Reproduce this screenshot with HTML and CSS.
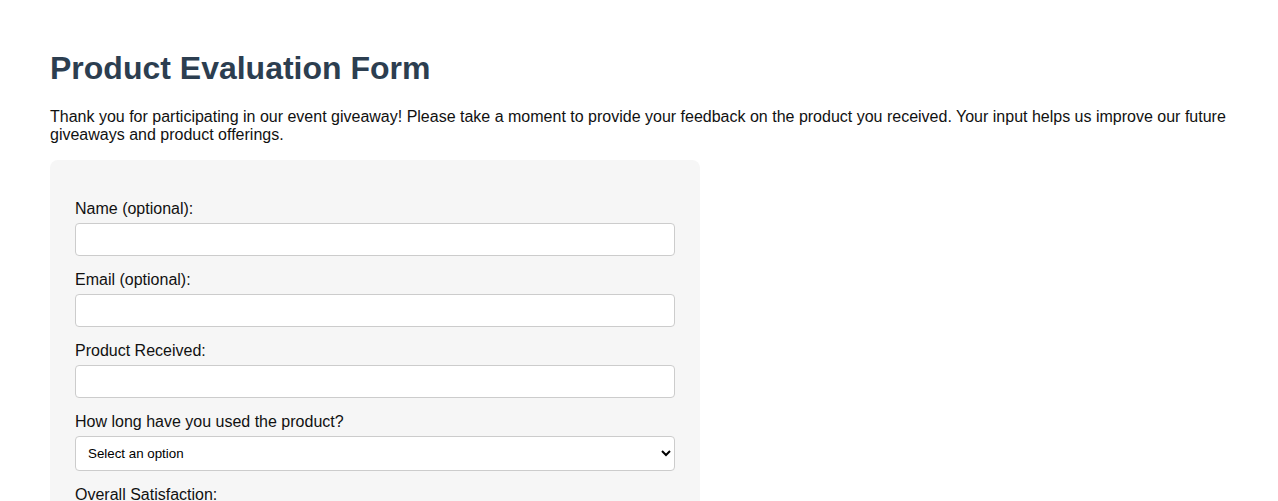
FILE: index.html
```html
<!DOCTYPE html>
<html lang="en">
<head>
  <meta charset="UTF-8" />
  <meta name="viewport" content="width=device-width, initial-scale=1.0" />
  <title>Product Evaluation Form</title>
  <link rel="stylesheet" href="styles.css">
</head>
<body>

  <div class="container">
    <h1>Product Evaluation Form</h1>
    <p class="intro">Thank you for participating in our event giveaway! Please take a moment to provide your feedback on the product you received. Your input helps us improve our future giveaways and product offerings.</p>

    <!-- 问卷主体 -->
    <form class="eval-form">
      <label for="name">Name (optional):</label>
      <input type="text" id="name" name="name" />

      <label for="email">Email (optional):</label>
      <input type="email" id="email" name="email" />

      <label for="product">Product Received:</label>
      <input type="text" id="product" name="product" />

      <label for="usage">How long have you used the product?</label>
      <select id="usage" name="usage">
        <option value="">Select an option</option>
        <option value="week">Less than a week</option>
        <option value="month">1-4 weeks</option>
        <option value="long">More than a month</option>
      </select>

      <label>Overall Satisfaction:</label>
      <div class="rating">
        <label><input type="radio" name="satisfaction" value="1" /> 1</label>
        <label><input type="radio" name="satisfaction" value="2" /> 2</label>
        <label><input type="radio" name="satisfaction" value="3" /> 3</label>
        <label><input type="radio" name="satisfaction" value="4" /> 4</label>
        <label><input type="radio" name="satisfaction" value="5" /> 5</label>
      </div>

      <label for="comments">Additional Comments:</label>
      <textarea id="comments" name="comments" rows="4"></textarea>

      <button type="submit" class="submit-btn">Submit Feedback</button>
    </form>
  </div>

</body>
</html>
```

FILE: styles.css
```css
body {
  font-family: 'Liberation Sans', Arial, sans-serif;
  margin: 0;
  padding: 0;
  background-color: #fff;
  color: #111;
}

.container {
  padding: 29px 50px;
}

h1 {
  color: #2c3e50;
  font-size: 32px;
  margin: 21px 0 21px;
}

.intro {
  font-size: 16px;
  margin: 0 0 16px;
}

.eval-form {
  max-width: 600px;
  background-color: #f6f6f6;
  border-radius: 8px;
  padding: 40px 25px 25px;
}

.eval-form > label {
  display: block;
  font-size: 16px;
  margin-bottom: 5px;
}

input[type="text"],
input[type="email"],
select,
textarea {
  display: block;
  width: 100%;
  box-sizing: border-box;
  padding: 8px;
  margin: 0 0 15px;
  border: 1px solid #ccc;
  border-radius: 4px;
  background-color: #fff;
  font-family: 'Liberation Sans', Arial, sans-serif;
  font-size: 13.33px;
}

select {
  height: 35px;
  padding: 0 8px;
  color: #000;
}

.rating {
  display: flex;
  gap: 15px;
  margin-bottom: 15px;
}

.submit-btn {
  padding: 10px 20px;
  background-color: #2c3e50;
  color: white;
  border: none;
  border-radius: 4px;
  font-size: 16px;
  cursor: pointer;
}
```
